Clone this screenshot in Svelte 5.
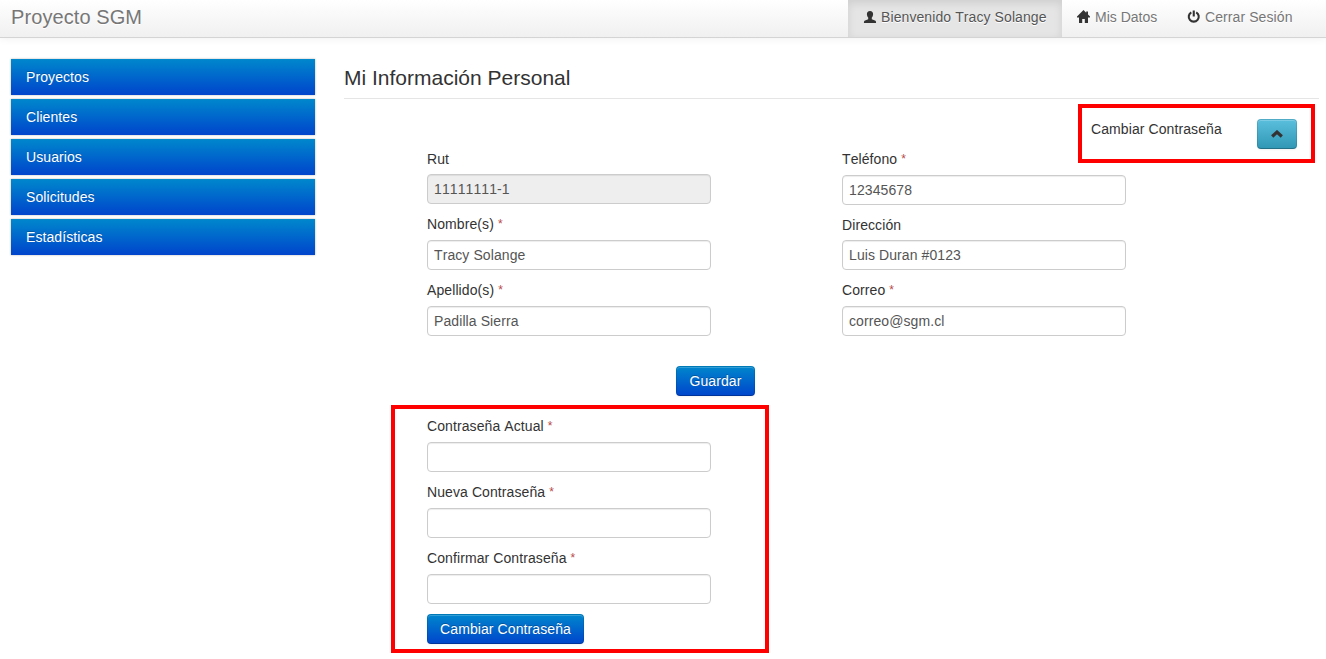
<script>
  const menu = ['Proyectos', 'Clientes', 'Usuarios', 'Solicitudes', 'Estadísticas'];
  const left = [
    { id: 'rut', label: 'Rut', value: '11111111-1', disabled: true, h: 65, gap: 5 },
    { id: 'nombre', label: 'Nombre(s)', required: true, value: 'Tracy Solange', h: 66, gap: 6 },
    { id: 'apellido', label: 'Apellido(s)', required: true, value: 'Padilla Sierra', h: 66, gap: 6 }
  ];
  const right = [
    { id: 'telefono', label: 'Teléfono', required: true, value: '12345678', h: 66, gap: 6 },
    { id: 'direccion', label: 'Dirección', value: 'Luis Duran #0123', h: 65, gap: 5 },
    { id: 'correo', label: 'Correo', required: true, value: 'correo@sgm.cl', h: 66, gap: 6 }
  ];
  const passwords = [
    { id: 'actual', label: 'Contraseña Actual', required: true, value: '', type: 'password', h: 66, gap: 6 },
    { id: 'nueva', label: 'Nueva Contraseña', required: true, value: '', type: 'password', h: 66, gap: 6 },
    { id: 'confirmar', label: 'Confirmar Contraseña', required: true, value: '', type: 'password', h: 66, gap: 6 }
  ];
</script>

{#snippet field(f)}
  <div class="field" style="height: {f.h}px; row-gap: {f.gap}px">
    <label for={f.id}><span>{f.label}</span>{#if f.required}<span class="req">*</span>{/if}</label>
    <input id={f.id} type={f.type ?? 'text'} value={f.value} disabled={f.disabled} />
  </div>
{/snippet}

<header class="navbar">
  <span class="brand">Proyecto SGM</span>
  <nav>
    <a href="#usuario" class="active">
      <svg width="14" height="14" viewBox="0 0 14 14"><path d="M7 1C9.100 1 10.200 2.300 10.100 4.300C10 5.800 9.500 6.800 8.800 7.600V9.200L12.500 10.800Q13.100 11.100 13.100 13H.9Q.9 11.100 1.500 10.800L5.200 9.200V7.600C4.500 6.800 4 5.800 3.900 4.300C3.800 2.300 4.900 1 7 1Z" /></svg>
      <span>Bienvenido Tracy Solange</span>
    </a>
    <a href="#datos">
      <svg width="14" height="14" viewBox="0 0 14 14"><path d="M6.500 0 0 6.600V7.400H2V13H5.200V9H7.800V13H11V7.400H13V6.600L11 4.500V1.500H9.200V2.700Z" /></svg>
      <span class="short">Mis Datos</span>
    </a>
    <a href="#salir">
      <svg width="14" height="14" viewBox="0 0 14 14"><path d="M4.300 2.300A5 5 0 1 0 9.200 2.300M6.750 .5V6.500" fill="none" stroke="#333" stroke-width="2.100" /></svg>
      <span>Cerrar Sesión</span>
    </a>
  </nav>
</header>

<div class="layout">
  <aside>
    {#each menu as item}
      <a href="#{item}">{item}</a>
    {/each}
  </aside>
  <main>
    <h1>Mi Información Personal</h1>
    <div class="profile">
      <div class="column">
        {#each left as f}{@render field(f)}{/each}
      </div>
      <div class="column">
        {#each right as f}{@render field(f)}{/each}
      </div>
      <div class="toggle">
        <span>Cambiar Contraseña</span>
        <button class="btn info" aria-label="Ocultar">
          <svg width="12" height="8" viewBox="0 0 12 8"><path d="M1.200 6.500 6 2.100 10.800 6.500" fill="none" stroke="#333" stroke-width="3.200" /></svg>
        </button>
      </div>
    </div>
    <div class="save"><button class="btn primary">Guardar</button></div>
    <section class="passwords">
      {#each passwords as f}{@render field(f)}{/each}
      <button class="btn primary change">Cambiar Contraseña</button>
    </section>
  </main>
</div>

<style>
  :global(body) {
    margin: 0;
    background: #fff;
    color: #333;
    font: 14px/20px "Liberation Sans", Arial, sans-serif;
    font-kerning: none;
    letter-spacing: 0.09px;
    overflow: hidden;
  }
  .navbar {
    box-sizing: border-box;
    height: 38px;
    display: flex;
    justify-content: space-between;
    padding: 0 18px 0 11px;
    border-bottom: 1px solid #d4d4d4;
    background: linear-gradient(#fff, #f0f0f0);
    box-shadow: 0 1px 8px rgba(0, 0, 0, 0.06);
  }
  .brand {
    font-size: 20px;
    line-height: 34px;
    color: #777;
    text-shadow: 0 1px 0 #fff;
  }
  nav { display: flex; }
  nav a {
    display: flex;
    align-items: flex-start;
    gap: 4px;
    padding: 7px 15px 10px;
    color: #777;
    text-decoration: none;
    text-shadow: 0 1px 0 #fff;
    white-space: nowrap;
  }
  nav svg { margin-top: 3px; fill: #333; }
  nav span { width: 88px; }
  nav .short { width: 62px; letter-spacing: 0; }
  nav .active {
    color: #555;
    background: #e5e5e5;
    box-shadow: inset 0 3px 8px rgba(0, 0, 0, 0.1);
  }
  nav .active span { width: 166px; }
  .layout { display: flex; gap: 29px; padding: 21px 7px 0 11px; }
  aside { width: 304px; display: flex; flex-direction: column; gap: 4px; }
  aside a {
    height: 36px;
    line-height: 36px;
    padding-left: 15px;
    color: #fff;
    text-decoration: none;
    text-shadow: 0 -1px 0 rgba(0, 0, 0, 0.2);
    background: linear-gradient(#08c, #04c);
    box-shadow: 0 0 2px rgba(0, 0, 0, 0.3);
  }
  main { flex: 1; }
  h1 {
    margin: 0;
    height: 39px;
    font-size: 21px;
    font-weight: 400;
    line-height: 38px;
    letter-spacing: 0;
    border-bottom: 1px solid #e5e5e5;
  }
  .profile { display: flex; padding-left: 83px; }
  .column { width: 284px; padding-top: 50px; flex: none; }
  .column + .column { margin-left: 131px; }
  .field { display: flex; flex-direction: column; }
  label { display: flex; gap: 4px; height: 20px; }
  .req { color: #b94a48; font-size: 12px; }
  input {
    box-sizing: border-box;
    width: 284px;
    height: 30px;
    padding: 4px 6px;
    border: 1px solid #ccc;
    border-radius: 4px;
    font: inherit;
    font-kerning: none;
    letter-spacing: inherit;
    color: #555;
    background: #fff;
    box-shadow: inset 0 1px 1px rgba(0, 0, 0, 0.075);
  }
  input:disabled { background: #eee; }
  .toggle {
    box-sizing: border-box;
    width: 237px;
    height: 59px;
    flex: none;
    display: flex;
    justify-content: space-between;
    margin: 5px 0 0 -48px;
    padding: 11px 14px 0 9px;
    border: 4px solid red;
  }
  .btn {
    box-sizing: border-box;
    height: 30px;
    padding: 4px 12px;
    border: 1px solid;
    border-color: rgba(0, 0, 0, 0.1) rgba(0, 0, 0, 0.1) rgba(0, 0, 0, 0.25);
    border-radius: 4px;
    font: inherit;
    font-kerning: none;
    letter-spacing: inherit;
    color: #fff;
    text-shadow: 0 -1px 0 rgba(0, 0, 0, 0.25);
    box-shadow: inset 0 1px 0 rgba(255, 255, 255, 0.2), 0 1px 2px rgba(0, 0, 0, 0.05);
    white-space: nowrap;
  }
  .primary { background: linear-gradient(#08c, #04c) border-box; }
  .info {
    width: 40px;
    padding: 0;
    display: flex;
    align-items: center;
    justify-content: center;
    background: linear-gradient(#5bc0de, #2f96b4) border-box;
  }
  .save { display: flex; padding: 20px 0 9px 332px; }
  .save .btn { width: 79px; }
  .passwords {
    box-sizing: border-box;
    width: 378px;
    height: 248px;
    margin-left: 47px;
    padding: 7px 32px 0;
    border: 4px solid red;
  }
  .change { width: 157px; }
</style>
